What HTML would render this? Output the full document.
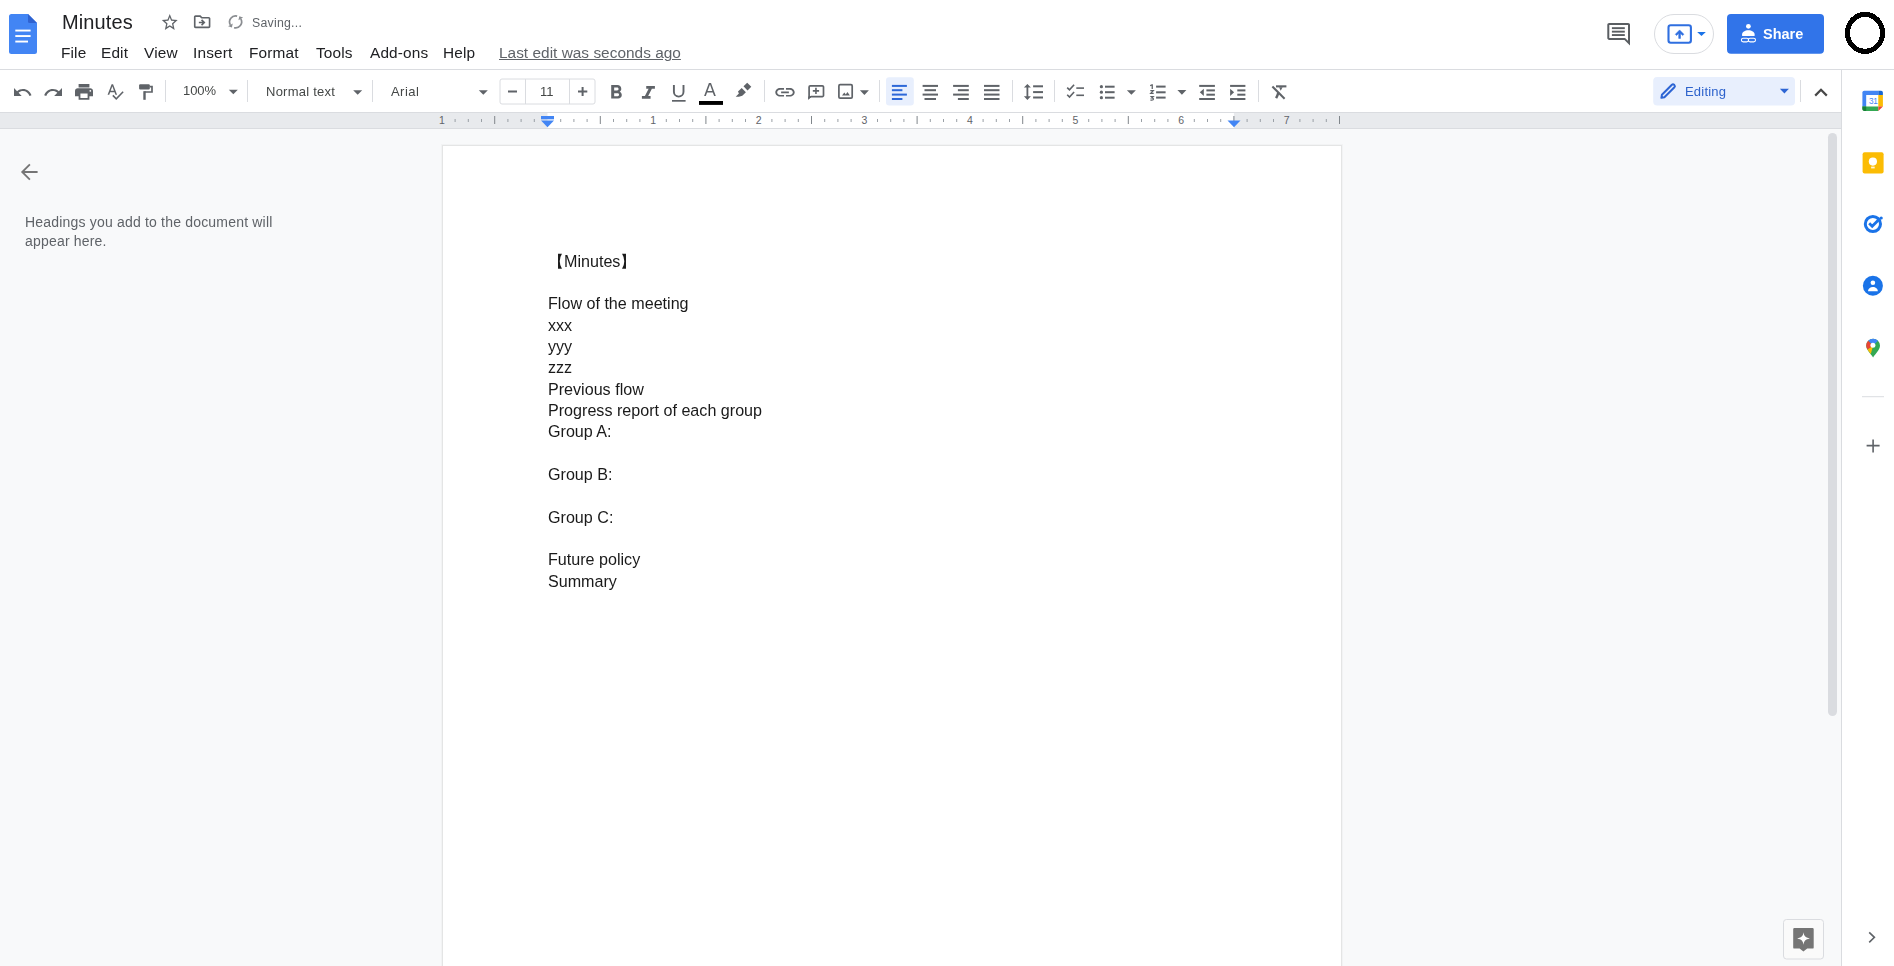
<!DOCTYPE html>
<html><head><meta charset="utf-8">
<style>
*{margin:0;padding:0;box-sizing:border-box}
html,body{width:1894px;height:966px;overflow:hidden;background:#fff;font-family:"Liberation Sans",sans-serif;}
.t,.doc{will-change:transform}
.a{position:absolute}
.t{position:absolute;white-space:nowrap;line-height:1}
#header{left:0;top:0;width:1894px;height:70px;background:#fff;border-bottom:1px solid #dadce0}
#ruler{left:0;top:112px;width:1841px;height:17px;background:#e8eaed;border-top:1px solid #dadce0;border-bottom:1px solid #dadce0}
#canvas{left:0;top:129px;width:1841px;height:837px;background:#f8f9fa}
#side{left:1841px;top:70px;width:53px;height:896px;background:#fff;border-left:1px solid #dadce0}
#page{left:442px;top:145px;width:900px;height:830px;background:#fff;border:1px solid #e4e5e5;box-shadow:0 0 0 1px #f2f3f4}
#scroll{left:1828px;top:133px;width:9px;height:583px;background:#dadce0;border-radius:5px}
.menu{font-size:15.4px;color:#202124;top:45.1px;letter-spacing:.15px}
.tb{font-size:13px;color:#444746;top:85px}
.doc{position:absolute;left:548.3px;font-size:16.13px;color:#1a1a1a;white-space:nowrap;line-height:21.33px}
</style></head><body>
<div id="header" class="a"></div>
<div id="canvas" class="a"></div>
<div id="ruler" class="a"></div>
<div id="side" class="a"></div>
<div id="page" class="a"></div>
<div id="scroll" class="a"></div>

<svg class="a" style="left:0;top:0" width="1894" height="966" viewBox="0 0 1894 966">
<rect x="547.5" y="113" width="686.4" height="15" fill="#fff"/>
<rect x="454.60" y="119" width="1" height="3" fill="#9aa0a6"/>
<rect x="467.80" y="119" width="1" height="3" fill="#9aa0a6"/>
<rect x="481.00" y="119" width="1" height="3" fill="#9aa0a6"/>
<rect x="494.20" y="116" width="1" height="8" fill="#80868b"/>
<rect x="507.40" y="119" width="1" height="3" fill="#9aa0a6"/>
<rect x="520.60" y="119" width="1" height="3" fill="#9aa0a6"/>
<rect x="533.80" y="119" width="1" height="3" fill="#9aa0a6"/>
<rect x="560.20" y="119" width="1" height="3" fill="#9aa0a6"/>
<rect x="573.40" y="119" width="1" height="3" fill="#9aa0a6"/>
<rect x="586.60" y="119" width="1" height="3" fill="#9aa0a6"/>
<rect x="599.80" y="116" width="1" height="8" fill="#80868b"/>
<rect x="613.00" y="119" width="1" height="3" fill="#9aa0a6"/>
<rect x="626.20" y="119" width="1" height="3" fill="#9aa0a6"/>
<rect x="639.40" y="119" width="1" height="3" fill="#9aa0a6"/>
<rect x="665.80" y="119" width="1" height="3" fill="#9aa0a6"/>
<rect x="679.00" y="119" width="1" height="3" fill="#9aa0a6"/>
<rect x="692.20" y="119" width="1" height="3" fill="#9aa0a6"/>
<rect x="705.40" y="116" width="1" height="8" fill="#80868b"/>
<rect x="718.60" y="119" width="1" height="3" fill="#9aa0a6"/>
<rect x="731.80" y="119" width="1" height="3" fill="#9aa0a6"/>
<rect x="745.00" y="119" width="1" height="3" fill="#9aa0a6"/>
<rect x="771.40" y="119" width="1" height="3" fill="#9aa0a6"/>
<rect x="784.60" y="119" width="1" height="3" fill="#9aa0a6"/>
<rect x="797.80" y="119" width="1" height="3" fill="#9aa0a6"/>
<rect x="811.00" y="116" width="1" height="8" fill="#80868b"/>
<rect x="824.20" y="119" width="1" height="3" fill="#9aa0a6"/>
<rect x="837.40" y="119" width="1" height="3" fill="#9aa0a6"/>
<rect x="850.60" y="119" width="1" height="3" fill="#9aa0a6"/>
<rect x="877.00" y="119" width="1" height="3" fill="#9aa0a6"/>
<rect x="890.20" y="119" width="1" height="3" fill="#9aa0a6"/>
<rect x="903.40" y="119" width="1" height="3" fill="#9aa0a6"/>
<rect x="916.60" y="116" width="1" height="8" fill="#80868b"/>
<rect x="929.80" y="119" width="1" height="3" fill="#9aa0a6"/>
<rect x="943.00" y="119" width="1" height="3" fill="#9aa0a6"/>
<rect x="956.20" y="119" width="1" height="3" fill="#9aa0a6"/>
<rect x="982.60" y="119" width="1" height="3" fill="#9aa0a6"/>
<rect x="995.80" y="119" width="1" height="3" fill="#9aa0a6"/>
<rect x="1009.00" y="119" width="1" height="3" fill="#9aa0a6"/>
<rect x="1022.20" y="116" width="1" height="8" fill="#80868b"/>
<rect x="1035.40" y="119" width="1" height="3" fill="#9aa0a6"/>
<rect x="1048.60" y="119" width="1" height="3" fill="#9aa0a6"/>
<rect x="1061.80" y="119" width="1" height="3" fill="#9aa0a6"/>
<rect x="1088.20" y="119" width="1" height="3" fill="#9aa0a6"/>
<rect x="1101.40" y="119" width="1" height="3" fill="#9aa0a6"/>
<rect x="1114.60" y="119" width="1" height="3" fill="#9aa0a6"/>
<rect x="1127.80" y="116" width="1" height="8" fill="#80868b"/>
<rect x="1141.00" y="119" width="1" height="3" fill="#9aa0a6"/>
<rect x="1154.20" y="119" width="1" height="3" fill="#9aa0a6"/>
<rect x="1167.40" y="119" width="1" height="3" fill="#9aa0a6"/>
<rect x="1193.80" y="119" width="1" height="3" fill="#9aa0a6"/>
<rect x="1207.00" y="119" width="1" height="3" fill="#9aa0a6"/>
<rect x="1220.20" y="119" width="1" height="3" fill="#9aa0a6"/>
<rect x="1233.40" y="116" width="1" height="8" fill="#80868b"/>
<rect x="1246.60" y="119" width="1" height="3" fill="#9aa0a6"/>
<rect x="1259.80" y="119" width="1" height="3" fill="#9aa0a6"/>
<rect x="1273.00" y="119" width="1" height="3" fill="#9aa0a6"/>
<rect x="1299.40" y="119" width="1" height="3" fill="#9aa0a6"/>
<rect x="1312.60" y="119" width="1" height="3" fill="#9aa0a6"/>
<rect x="1325.80" y="119" width="1" height="3" fill="#9aa0a6"/>
<rect x="1339.00" y="116" width="1" height="8" fill="#80868b"/>
<rect x="1339.00" y="116" width="1" height="8" fill="#80868b"/>
<text x="441.90" y="124" font-size="10.5" fill="#5f6368" text-anchor="middle" font-family="Liberation Sans">1</text>
<text x="653.10" y="124" font-size="10.5" fill="#5f6368" text-anchor="middle" font-family="Liberation Sans">1</text>
<text x="758.70" y="124" font-size="10.5" fill="#5f6368" text-anchor="middle" font-family="Liberation Sans">2</text>
<text x="864.30" y="124" font-size="10.5" fill="#5f6368" text-anchor="middle" font-family="Liberation Sans">3</text>
<text x="969.90" y="124" font-size="10.5" fill="#5f6368" text-anchor="middle" font-family="Liberation Sans">4</text>
<text x="1075.50" y="124" font-size="10.5" fill="#5f6368" text-anchor="middle" font-family="Liberation Sans">5</text>
<text x="1181.10" y="124" font-size="10.5" fill="#5f6368" text-anchor="middle" font-family="Liberation Sans">6</text>
<text x="1286.70" y="124" font-size="10.5" fill="#5f6368" text-anchor="middle" font-family="Liberation Sans">7</text>
<rect x="541" y="116" width="13" height="3.3" fill="#4285f4"/><path d="M541 120.4h13l-6.5 6.8z" fill="#4285f4"/>
<path d="M1227.5 120.4h13l-6.5 6.8z" fill="#4285f4"/>
<path d="M22 9.24l-7.19-.62L12 2 9.19 8.63 2 9.24l5.46 4.73L5.82 21 12 17.27 18.18 21l-1.63-7.03L22 9.24zM12 15.4l-3.76 2.27 1-4.28-3.32-2.88 4.38-.38L12 6.1l1.71 4.04 4.38.38-3.32 2.88 1 4.28L12 15.4z" transform="matrix(0.7950 0 0 0.8421 160.210 12.216)" fill="#5f6368" />
<path d="M20 6h-8l-2-2H4c-1.1 0-1.99.9-1.99 2L2 18c0 1.1.9 2 2 2h16c1.1 0 2-.9 2-2V8c0-1.1-.9-2-2-2zm0 12H4V6h5.17l2 2H20v10zm-7.84-6H8v2h4.16l-1.59 1.59L11.99 17 16 13.01 11.99 9l-1.41 1.41L12.16 12z" transform="matrix(0.8250 0 0 0.8062 192.250 12.075)" fill="#5f6368" />
<path d="M237.15 16.10A6.0 6.0 0 0 0 230.40 24.90" fill="none" stroke="#8a8d91" stroke-width="1.7"/><path d="M232.74 23.55L228.07 26.25L231.90 27.50z" fill="#8a8d91"/><path d="M234.05 27.70A6.0 6.0 0 0 0 240.80 18.90" fill="none" stroke="#8a8d91" stroke-width="1.7"/><path d="M238.46 20.25L243.13 17.55L239.30 16.30z" fill="#8a8d91"/>
<path d="M12.5 8c-2.65 0-5.05.99-6.9 2.6L2 7v9h9l-3.62-3.62c1.39-1.16 3.16-1.88 5.12-1.88 3.54 0 6.55 2.31 7.6 5.5l2.37-.78C21.08 11.03 17.15 8 12.5 8z" transform="matrix(0.8549 0 0 0.8889 12.290 81.778)" fill="#5f6368" />
<path d="M18.4 10.6C16.55 8.99 14.15 8 11.5 8c-4.65 0-8.58 3.03-9.96 7.22L3.9 16c1.05-3.19 4.05-5.5 7.6-5.5 1.95 0 3.73.72 5.12 1.88L13 16h9V7l-3.6 3.6z" transform="matrix(0.8700 0 0 0.8889 42.860 81.778)" fill="#5f6368" />
<path d="M19 8H5c-1.66 0-3 1.34-3 3v6h4v4h12v-4h4v-6c0-1.66-1.34-3-3-3zm-3 11H8v-5h8v5zm3-7c-.55 0-1-.45-1-1s.45-1 1-1 1 .45 1 1-.45 1-1 1zm-1-9H6v4h12V3z" transform="matrix(0.9000 0 0 0.8722 73.200 81.383)" fill="#5f6368" />
<path d="M12.45 16h2.09L9.43 3H7.57L2.46 16h2.09l1.12-3h5.64l1.14 3zm-6.02-5L8.5 5.48 10.57 11H6.43zm15.16.59l-8.09 8.09L9.83 16l-1.41 1.41 5.09 5.09L23 13l-1.41-1.41z" transform="matrix(0.7838 0 0 0.8051 105.672 81.885)" fill="#5f6368" />
<rect x="139.1" y="84.2" width="10.7" height="5.4" rx="1.1" fill="#5f6368"/><path d="M149.6 86.7h2.4v5.3h-7.6" fill="none" stroke="#5f6368" stroke-width="1.7"/><rect x="143.3" y="91.2" width="2.4" height="8.6" fill="#5f6368"/>
<path d="M228.80 89.70h9l-4.5 4.6z" fill="#5f6368"/>
<path d="M353.20 90.20h9l-4.5 4.6z" fill="#5f6368"/>
<path d="M478.80 90.20h9l-4.5 4.6z" fill="#5f6368"/>
<path d="M859.90 90.30h9l-4.5 4.6z" fill="#5f6368"/>
<path d="M1126.90 90.20h9l-4.5 4.6z" fill="#5f6368"/>
<path d="M1177.40 90.10h9l-4.5 4.6z" fill="#5f6368"/>
<rect x="500" y="79" width="95" height="25" rx="2" fill="none" stroke="#dadce0" stroke-width="1"/>
<path d="M525.5 79v25M569.5 79v25" stroke="#dadce0" stroke-width="1"/>
<rect x="508" y="90.5" width="9" height="2" fill="#5f6368"/>
<path d="M578 90.5h9.3v2H578zM581.6 87h2v8.9h-2z" fill="#5f6368"/>
<path d="M15.6 10.79c.97-.67 1.65-1.77 1.65-2.79 0-2.26-1.75-4-4-4H7v14h7.04c2.09 0 3.71-1.7 3.71-3.79 0-1.52-.86-2.82-2.15-3.42zM10 6.5h3c.83 0 1.5.67 1.5 1.5s-.67 1.5-1.5 1.5h-3v-3zm3.5 9H10v-3h3.5c.83 0 1.5.67 1.5 1.5s-.67 1.5-1.5 1.5z" transform="matrix(0.9860 0 0 0.9643 604.298 81.243)" fill="#5f6368" />
<path d="M10 4v3h2.21l-3.42 8H6v3h8v-3h-2.21l3.42-8H18V4z" transform="matrix(1.0833 0 0 0.9071 635.400 82.371)" fill="#5f6368" />
<path d="M673.9 85v6.8a4.8 4.8 0 0 0 9.6 0V85" fill="none" stroke="#5f6368" stroke-width="1.9"/><rect x="672" y="100" width="13.6" height="1.7" fill="#5f6368"/>
<path d="M704.1 96L708.9 83h2.1L715.8 96h-1.7l-1.3-3.6h-5.7L705.8 96zM707.6 91h4.7L710 84.6z" fill="#5f6368"/>
<rect x="699" y="101" width="24" height="3.9" fill="#000"/>
<path d="M743.5 86.3L747.2 82.8 751.3 86.8 747.5 90.5z M738 91.5L741.7 88 745.9 92.2 742.3 95.8 L738.9 96.8 735.7 96.8 738.9 93.5z" fill="#5f6368"/>
<path d="M3.9 12c0-1.71 1.39-3.1 3.1-3.1h4V7H7c-2.76 0-5 2.24-5 5s2.24 5 5 5h4v-1.9H7c-1.71 0-3.1-1.39-3.1-3.1zM8 13h8v-2H8v2zm9-6h-4v1.9h4c1.71 0 3.1 1.39 3.1 3.1s-1.39 3.1-3.1 3.1h-4V17h4c2.76 0 5-2.24 5-5s-2.24-5-5-5z" transform="matrix(0.9700 0 0 0.8600 773.360 81.980)" fill="#5f6368" />
<path d="M809.1 97.6V87a1.2 1.2 0 0 1 1.2-1.2h12a1.2 1.2 0 0 1 1.2 1.2v8.4a1.2 1.2 0 0 1-1.2 1.2H811.3z" fill="none" stroke="#5f6368" stroke-width="1.7"/><path d="M808.2 96.6v3.3l3.3-3.3z" fill="#5f6368"/><path d="M812.8 90.1h6.3v1.6h-6.3zM815.15 87.8h1.6v6.3h-1.6z" fill="#5f6368"/>
<rect x="838.9" y="84.7" width="13.3" height="13.5" rx="1.2" fill="none" stroke="#5f6368" stroke-width="1.7"/><path d="M842 95.6l2.3-3 1.5 1.9 1.6-2.6 2.5 3.7z" fill="#5f6368"/>
<rect x="886" y="77.3" width="27.8" height="28.1" rx="3" fill="#e8effd"/>
<rect x="891.9" y="84.9" width="15.0" height="2" fill="#2d68d8"/><rect x="891.9" y="89.2" width="10.5" height="2" fill="#2d68d8"/><rect x="891.9" y="93.6" width="15.0" height="2" fill="#2d68d8"/><rect x="891.9" y="98.0" width="10.5" height="2" fill="#2d68d8"/>
<rect x="922.6" y="84.9" width="15.399999999999977" height="2" fill="#5f6368"/><rect x="924.5" y="89.2" width="11.5" height="2" fill="#5f6368"/><rect x="922.6" y="93.6" width="15.399999999999977" height="2" fill="#5f6368"/><rect x="924.5" y="98.0" width="11.5" height="2" fill="#5f6368"/>
<rect x="953.1" y="84.9" width="15.699999999999932" height="2" fill="#5f6368"/><rect x="957.9" y="89.2" width="10.899999999999977" height="2" fill="#5f6368"/><rect x="953.1" y="93.6" width="15.699999999999932" height="2" fill="#5f6368"/><rect x="957.9" y="98.0" width="10.899999999999977" height="2" fill="#5f6368"/>
<rect x="984" y="84.9" width="15.5" height="2" fill="#5f6368"/><rect x="984" y="89.2" width="15.5" height="2" fill="#5f6368"/><rect x="984" y="93.6" width="15.5" height="2" fill="#5f6368"/><rect x="984" y="98.0" width="15.5" height="2" fill="#5f6368"/>
<path d="M1027.4 83.9l3.5 3.6h-2.6v8.8h2.6l-3.5 3.6-3.5-3.6h2.6v-8.8h-2.6z" fill="#5f6368"/>
<rect x="1033.1" y="85.3" width="9.900000000000091" height="2" fill="#5f6368"/><rect x="1033.1" y="91.1" width="9.900000000000091" height="2" fill="#5f6368"/><rect x="1033.1" y="96.5" width="9.900000000000091" height="2" fill="#5f6368"/>
<path d="M1067.2 87.6l2.3 2.3 4.6-5.1" fill="none" stroke="#5f6368" stroke-width="1.6"/><path d="M1067.2 94.8l2.3 2.3 4.6-5.1" fill="none" stroke="#5f6368" stroke-width="1.6"/>
<rect x="1076.3" y="87.3" width="7.7000000000000455" height="1.6" fill="#5f6368"/><rect x="1076.3" y="94.5" width="7.7000000000000455" height="1.6" fill="#5f6368"/>
<circle cx="1101.4" cy="86.7" r="1.6" fill="#5f6368"/><circle cx="1101.4" cy="92.2" r="1.6" fill="#5f6368"/><circle cx="1101.4" cy="97.7" r="1.6" fill="#5f6368"/>
<rect x="1105" y="85.7" width="9.599999999999909" height="2" fill="#5f6368"/><rect x="1105" y="91.2" width="9.599999999999909" height="2" fill="#5f6368"/><rect x="1105" y="96.7" width="9.599999999999909" height="2" fill="#5f6368"/>
<path d="M1150.1 85.1l1.7-.8h1.1v4.6h-1.3v-3.2l-1.5.6z" fill="#5f6368"/>
<path d="M1150.3 90.6h3l-2.6 2.8h3" fill="none" stroke="#5f6368" stroke-width="1.25"/>
<path d="M1150.3 96.5h2.9l-1.5 1.3c1.3 0 1.8.5 1.8 1.2s-.6 1.2-1.8 1.2h-1.3" fill="none" stroke="#5f6368" stroke-width="1.2"/>
<rect x="1156.1" y="85.6" width="9.5" height="2" fill="#5f6368"/><rect x="1156.1" y="91.3" width="9.5" height="2" fill="#5f6368"/><rect x="1156.1" y="96.6" width="9.5" height="2" fill="#5f6368"/>
<rect x="1199.2" y="84.9" width="15.700000000000045" height="2" fill="#5f6368"/><rect x="1206.4" y="89.4" width="8.5" height="2" fill="#5f6368"/><rect x="1206.4" y="93.7" width="8.5" height="2" fill="#5f6368"/><rect x="1199.2" y="98.0" width="15.700000000000045" height="2" fill="#5f6368"/>
<path d="M1203.8 88.7v7.3l-4 -3.65z" fill="#5f6368"/>
<rect x="1230.1" y="84.9" width="15.300000000000182" height="2" fill="#5f6368"/><rect x="1237.3" y="89.4" width="8.100000000000136" height="2" fill="#5f6368"/><rect x="1237.3" y="93.7" width="8.100000000000136" height="2" fill="#5f6368"/><rect x="1230.1" y="98.0" width="15.300000000000182" height="2" fill="#5f6368"/>
<path d="M1230.1 88.7v7.3l4 -3.65z" fill="#5f6368"/>
<rect x="1276" y="85.3" width="10.4" height="2.1" fill="#5f6368"/><path d="M1279.1 87.2h3.5l-1.9 3.5z" fill="#5f6368"/><path d="M1278.4 92.5c-.6 2.2-1.3 4-2.3 5.6" fill="none" stroke="#5f6368" stroke-width="2.5"/><path d="M1272.4 86.6l12.2 12.2" stroke="#5f6368" stroke-width="2.1"/>
<rect x="165.0" y="80" width="1" height="22" fill="#dadce0"/>
<rect x="247.0" y="80" width="1" height="22" fill="#dadce0"/>
<rect x="372.0" y="80" width="1" height="22" fill="#dadce0"/>
<rect x="764.0" y="80" width="1" height="22" fill="#dadce0"/>
<rect x="879.0" y="80" width="1" height="22" fill="#dadce0"/>
<rect x="1012.0" y="80" width="1" height="22" fill="#dadce0"/>
<rect x="1054.0" y="80" width="1" height="22" fill="#dadce0"/>
<rect x="1258.0" y="80" width="1" height="22" fill="#dadce0"/>
<rect x="1653.2" y="77" width="141.8" height="28.6" rx="4" fill="#e8effd"/>
<path d="M1661.4 97.8l.5-3 10-10a1.6 1.6 0 0 1 2.2 0l.3.3a1.6 1.6 0 0 1 0 2.2l-10 10z" fill="none" stroke="#2d65d4" stroke-width="2" stroke-linejoin="round"/>
<path d="M1779.90 88.80h9l-4.5 4.6z" fill="#2d65d4"/>
<rect x="1800" y="80" width="1" height="22" fill="#dadce0"/>
<path d="M1815.2 95.6l5.8-5.8 5.8 5.8" fill="none" stroke="#474747" stroke-width="2.2"/>
<path d="M1608.3 24.9a.9.9 0 0 1 .9-.9h18.9a.9.9 0 0 1 .9.9v18.3l-4.3-4.3H1609.2a.9.9 0 0 1-.9-.9z" fill="none" stroke="#5a5e62" stroke-width="2"/>
<rect x="1611.9" y="27.2" width="12.9" height="1.9" fill="#5a5e62"/><rect x="1611.9" y="30.7" width="12.9" height="1.9" fill="#5a5e62"/><rect x="1611.9" y="34.1" width="12.9" height="1.9" fill="#5a5e62"/>
<rect x="1654.5" y="14.5" width="59" height="39" rx="19.5" fill="#fff" stroke="#dadce0" stroke-width="1"/>
<rect x="1668.5" y="25.2" width="22.4" height="17.6" rx="2.2" fill="none" stroke="#2f6fe0" stroke-width="2.1"/>
<path d="M1679.6 29.9l4.3 4.4-1.3 1.2-2.1-2.1v5h-1.8v-5l-2.1 2.1-1.3-1.2z" fill="#2f6fe0" stroke="#2f6fe0" stroke-width=".5" stroke-linejoin="round"/>
<path d="M1697.20 31.90h8.6l-4.3 4z" fill="#1a73e8"/>
<rect x="1727" y="14" width="97" height="39.8" rx="4" fill="#3174e9"/>
<circle cx="1748.4" cy="26.3" r="2.4" fill="#fff"/><path d="M1742.1 36.1v-1.6c0-2.4 2.8-4.2 6.25-4.2s6.25 1.8 6.25 4.2v1.6z" fill="#fff"/>
<g fill="none" stroke="#fff" stroke-width="1.1"><rect x="1741.4" y="38.3" width="7.2" height="3.6" rx="1.8"/><rect x="1748.3" y="38.3" width="7.2" height="3.6" rx="1.8"/></g>
<ellipse cx="1865" cy="32.85" rx="17.5" ry="18.45" fill="none" stroke="#000" stroke-width="5.1" shape-rendering="crispEdges"/>
<g><rect x="1866.2" y="95.1" width="12.1" height="11.5" fill="#fff"/><path d="M1864.2 90.8h14.1v4.3h-15.9v-2.5a1.8 1.8 0 0 1 1.8-1.8z" fill="#4285f4"/><rect x="1862.4" y="95" width="3.8" height="11.7" fill="#4285f4"/><path d="M1878.3 90.8h2.8a1.8 1.8 0 0 1 1.8 1.8v2.5h-4.6z" fill="#1967d2"/><rect x="1878.3" y="95" width="4.6" height="11.6" fill="#fbbc04"/><path d="M1862.4 106.6h15.9v4.3h-14.1a1.8 1.8 0 0 1-1.8-1.8z" fill="#34a853"/><path d="M1862.4 106.6h3.8v4.3h-2a1.8 1.8 0 0 1-1.8-1.8z" fill="#188038"/><path d="M1878.3 106.6h4.6l-4.6 4.3z" fill="#ea4335"/>
<text x="1868.9" y="104.3" font-size="8.2" fill="#4285f4" font-family="Liberation Sans" letter-spacing="-0.2">31</text></g>
<rect x="1862.6" y="152.2" width="21" height="21.2" rx="2" fill="#fbbc04"/><circle cx="1872.9" cy="161.6" r="4.1" fill="#fff"/><rect x="1871.1" y="166.6" width="3.6" height="1.8" fill="#fff" opacity=".85"/>
<circle cx="1872.9" cy="224" r="7.6" fill="none" stroke="#1a73e8" stroke-width="3"/><path d="M1869.2 223.3l3 3 7.5-7.6" fill="none" stroke="#1a73e8" stroke-width="2.8"/><circle cx="1881.2" cy="218" r="1.6" fill="#1a73e8"/>
<circle cx="1872.9" cy="285.8" r="10" fill="#1a73e8"/><circle cx="1872.9" cy="282.7" r="2.3" fill="#fff"/><path d="M1868 291.2c0-2.6 2.2-4.3 4.9-4.3s4.9 1.7 4.9 4.3z" fill="#fff"/>
<g transform="translate(1866.2 338.7)"><path d="M6.9 0A6.9 6.9 0 0 0 0 6.9c0 4.4 4.7 8.4 6.9 11.8 2.2-3.4 6.9-7.4 6.9-11.8A6.9 6.9 0 0 0 6.9 0z" fill="#34a853"/><path d="M6.9 0A6.9 6.9 0 0 0 1.9 2.1L6.9 7.1 11.8 2.1A6.9 6.9 0 0 0 6.9 0z" fill="#4285f4"/><path d="M1.9 2.1A6.9 6.9 0 0 0 0 6.9c0 1.4.5 2.7 1.3 4L6.9 7.1z" fill="#ea4335"/><path d="M1.3 10.9c.9 1.5 2.2 3 3.3 4.4L6.9 7.1z" fill="#fbbc04"/><circle cx="6.7" cy="6.5" r="2.5" fill="#fff"/></g>
<rect x="1862" y="396.2" width="22" height="1" fill="#dadce0"/>
<path d="M1866.6 445.6h13M1873.1 439.6v13" stroke="#5f6368" stroke-width="1.6"/>
<path d="M1869.2 932.3l5.2 5-5.2 5" fill="none" stroke="#5f6368" stroke-width="1.6"/>
<path d="M37.6 172H23.4M29.9 164.3l-7.7 7.7 7.7 7.7" fill="none" stroke="#757575" stroke-width="1.8"/>
<rect x="1783.5" y="919.5" width="40" height="39.5" rx="3" fill="#fafafa" stroke="#dadce0" stroke-width="1"/>
<path d="M1794.4 928h18.1a1.2 1.2 0 0 1 1.2 1.2v18.2a1.2 1.2 0 0 1-1.2 1.2h-5.3l-3.8 3-3.8-3h-5.2a1.2 1.2 0 0 1-1.2-1.2V929.2a1.2 1.2 0 0 1 1.2-1.2z" fill="#757575"/><path d="M1803.5 932.3c.6 3.7 1.5 5.2 6.4 6.2-4.9 1-5.8 2.5-6.4 6.2-.6-3.7-1.5-5.2-6.4-6.2 4.9-1 5.8-2.5 6.4-6.2z" fill="#fff"/>
<!-- docs logo -->
<g transform="translate(9 14)">
  <path d="M2.5 0H19L28 9V37.5A2.5 2.5 0 0 1 25.5 40H2.5A2.5 2.5 0 0 1 0 37.5V2.5A2.5 2.5 0 0 1 2.5 0Z" fill="#4285f4"/>
  <path d="M19 0L28 9H20.5A1.5 1.5 0 0 1 19 7.5Z" fill="#2f62d0"/>
  <rect x="6.3" y="15.6" width="15.3" height="1.9" fill="#fff"/>
  <rect x="6.3" y="21.1" width="15.3" height="1.9" fill="#fff"/>
  <rect x="6.3" y="26.6" width="12.7" height="1.9" fill="#fff"/>
</g>
</svg>

<div class="t" style="left:62.3px;top:11.8px;font-size:20px;color:#202124;letter-spacing:.1px">Minutes</div>
<div class="t" style="left:252px;top:17px;font-size:12.3px;color:#5f6368;letter-spacing:.25px">Saving...</div>

<div class="t menu" style="left:61px">File</div>
<div class="t menu" style="left:101px">Edit</div>
<div class="t menu" style="left:144px">View</div>
<div class="t menu" style="left:193px">Insert</div>
<div class="t menu" style="left:249px">Format</div>
<div class="t menu" style="left:316px">Tools</div>
<div class="t menu" style="left:370px">Add-ons</div>
<div class="t menu" style="left:443px">Help</div>
<div class="t menu" style="left:499px;color:#5f6368;text-decoration:underline;letter-spacing:.02px">Last edit was seconds ago</div>

<div class="t tb" style="left:183px;letter-spacing:-.1px;top:84.2px">100%</div>
<div class="t tb" style="left:265.5px;letter-spacing:.25px">Normal text</div>
<div class="t tb" style="left:391px;letter-spacing:.45px">Arial</div>
<div class="t tb" style="left:540px">11</div>
<div class="t" style="left:1685px;top:85px;font-size:13px;color:#2d62cc;letter-spacing:.2px">Editing</div>
<div class="t" style="left:1763px;top:27px;font-size:14.5px;font-weight:bold;color:#fff">Share</div>

<div class="t" style="left:25px;top:212.5px;font-size:14px;color:#5f6368;line-height:18.5px;letter-spacing:.19px;background:#f8f9fa">Headings you add to the document will<br>appear here.</div>

<div class="doc" style="top:251px">【Minutes】</div>
<div class="doc" style="top:293px">Flow of the meeting</div>
<div class="doc" style="top:315px">xxx</div>
<div class="doc" style="top:336px">yyy</div>
<div class="doc" style="top:357px">zzz</div>
<div class="doc" style="top:379px">Previous flow</div>
<div class="doc" style="top:400px">Progress report of each group</div>
<div class="doc" style="top:421px">Group A:</div>
<div class="doc" style="top:464px">Group B:</div>
<div class="doc" style="top:507px">Group C:</div>
<div class="doc" style="top:549px">Future policy</div>
<div class="doc" style="top:571px">Summary</div>

</body></html>
